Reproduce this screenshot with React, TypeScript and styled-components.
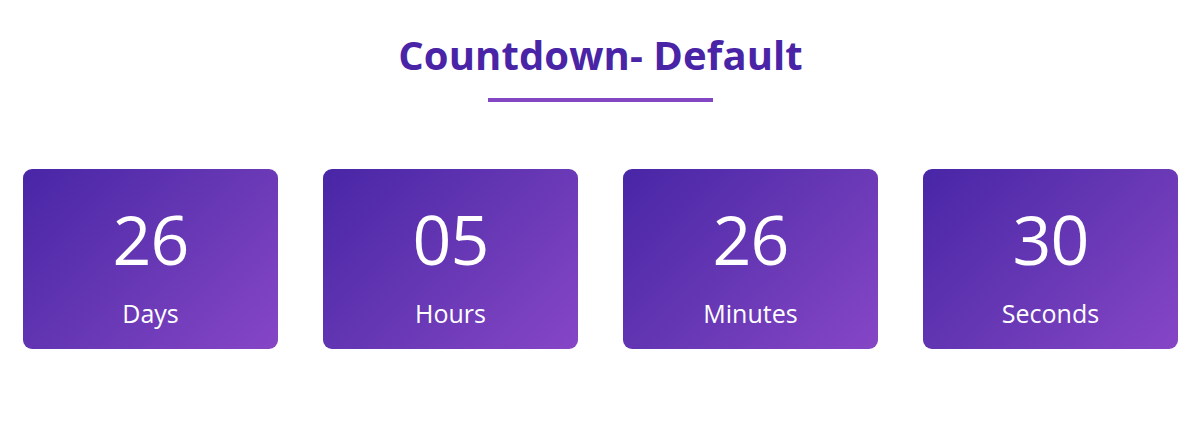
import React from "react";
import styled, { createGlobalStyle } from "styled-components";

const GlobalStyle = createGlobalStyle`
  html, body { margin: 0; padding: 0; background: #ffffff; }
  body { font-family: "Open Sans", "Noto Sans", sans-serif; }
`;

const Page = styled.main`
  width: 1200px;
  box-sizing: border-box;
  padding: 32px 22px 0 23px;
  display: flex;
  flex-direction: column;
  align-items: center;
`;

const Title = styled.h2`
  margin: 0;
  font-family: "Open Sans", sans-serif;
  font-weight: 700;
  font-size: 40px;
  line-height: 46px;
  color: #4a24a6;
  letter-spacing: 0.1px;
`;

const Underline = styled.div`
  width: 225px;
  height: 4px;
  margin-top: 20px;
  background: #8447c4;
`;

const Grid = styled.div`
  margin-top: 67px;
  width: 100%;
  display: grid;
  grid-template-columns: repeat(4, 255px);
  column-gap: 45px;
`;

const Card = styled.div`
  height: 180px;
  border-radius: 9px;
  background: linear-gradient(135deg, #4826a6 0%, #6637b4 50%, #8646c6 100%);
  color: #ffffff;
  display: flex;
  flex-direction: column;
  align-items: center;
  box-sizing: border-box;
  padding-top: 30px;
`;

const Value = styled.div`
  font-family: "Open Sans", sans-serif;
  font-weight: 400;
  font-size: 68px;
  line-height: 80px;
  letter-spacing: -1px;
`;

const Label = styled.div`
  margin-top: 18px;
  font-family: "Open Sans", sans-serif;
  font-weight: 400;
  font-size: 25px;
  line-height: 32px;
`;

const items = [
  { value: "26", label: "Days" },
  { value: "05", label: "Hours" },
  { value: "26", label: "Minutes" },
  { value: "30", label: "Seconds" },
];

export default function App() {
  return (
    <>
      <GlobalStyle />
      <Page>
        <Title>Countdown- Default</Title>
        <Underline />
        <Grid>
          {items.map((it) => (
            <Card key={it.label}>
              <Value>{it.value}</Value>
              <Label>{it.label}</Label>
            </Card>
          ))}
        </Grid>
      </Page>
    </>
  );
}
